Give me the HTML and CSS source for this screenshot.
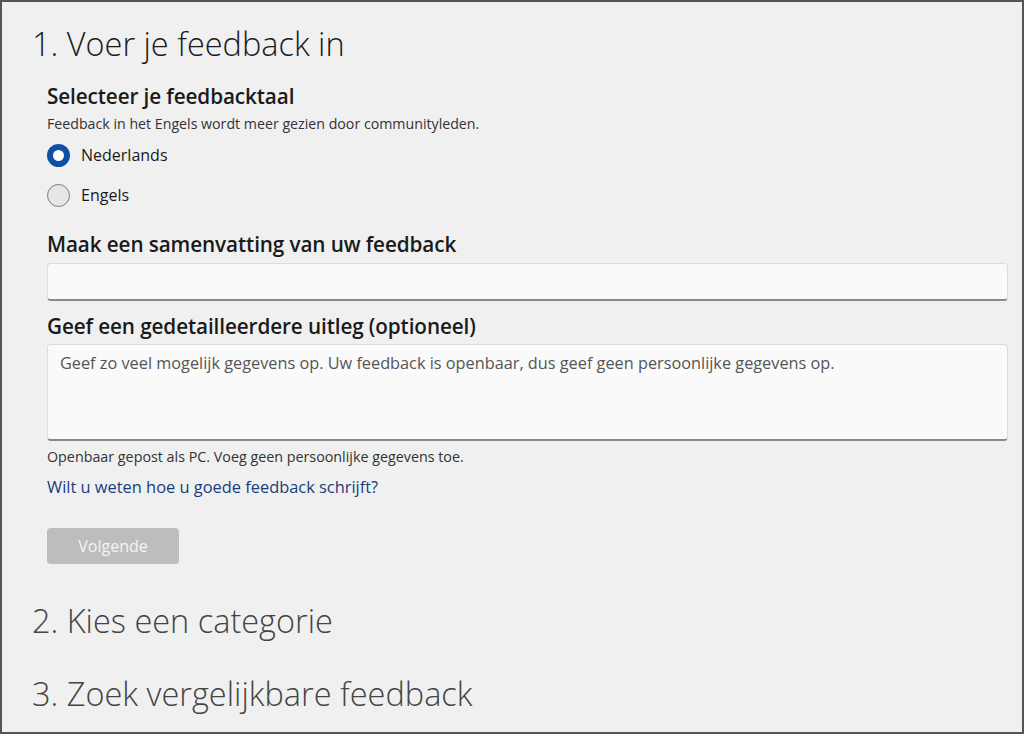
FILE: index.html
```html
<!DOCTYPE html>
<html lang="nl">
<head>
<meta charset="utf-8">
<title>Feedback</title>
<link rel="stylesheet" href="styles.css">
</head>
<body>
<div class="frame">
  <section class="step">
    <h1 class="step-title">1. Voer je feedback in</h1>
    <div class="form">
      <h2 class="label lang-label">Selecteer je feedbacktaal</h2>
      <p class="hint">Feedback in het Engels wordt meer gezien door communityleden.</p>
      <div class="radios">
        <label class="radio"><span class="dot checked"></span><span class="radio-text">Nederlands</span></label>
        <label class="radio"><span class="dot"></span><span class="radio-text">Engels</span></label>
      </div>
      <h2 class="label summary-label">Maak een samenvatting van uw feedback</h2>
      <div class="input"></div>
      <h2 class="label detail-label">Geef een gedetailleerdere uitleg (optioneel)</h2>
      <div class="textarea"><span class="placeholder">Geef zo veel mogelijk gegevens op. Uw feedback is openbaar, dus geef geen persoonlijke gegevens op.</span></div>
      <p class="note">Openbaar gepost als PC. Voeg geen persoonlijke gegevens toe.</p>
      <a class="link" href="#">Wilt u weten hoe u goede feedback schrijft?</a>
      <button class="btn" disabled>Volgende</button>
    </div>
  </section>
  <h1 class="step-title muted second">2. Kies een categorie</h1>
  <h1 class="step-title muted third">3. Zoek vergelijkbare feedback</h1>
</div>
</body>
</html>
```
FILE: styles.css
```css
* { box-sizing: border-box; }
html, body { margin: 0; padding: 0; }
body {
  width: 1024px;
  height: 734px;
  overflow: hidden;
  font-family: "Open Sans", "Noto Sans", sans-serif;
  color: #1a1a1a;
  background: #f0f0f0;
}
.frame {
  width: 1024px;
  height: 734px;
  border: 2px solid #555;
  background: #f0f0f0;
  padding: 0 0 0 30px;
  display: flex;
  flex-direction: column;
}
.step-title {
  margin: 0;
  font-weight: 300;
  font-size: 32.5px;
  line-height: 40px;
  color: #1b1b1b;
}
.step > .step-title { margin-top: 22px; }
.form {
  padding-left: 15px;
  width: 963px;
  display: flex;
  flex-direction: column;
  align-items: flex-start;
}
.label {
  margin: 0;
  font-size: 20.7px;
  font-weight: 600;
  line-height: 24px;
  color: #1a1a1a;
  letter-spacing: -0.1px;
}
.lang-label { margin-top: 20px; }
.hint {
  margin: 7px 0 0;
  font-size: 14.2px;
  line-height: 18px;
  color: #333;
}
.radios {
  display: flex;
  flex-direction: column;
  gap: 17px;
  margin-top: 11px;
}
.radio {
  display: flex;
  align-items: center;
  gap: 11px;
  font-size: 16px;
  line-height: 23px;
  color: #1a1a1a;
}
.dot {
  width: 23px;
  height: 23px;
  border-radius: 50%;
  border: 1px solid #7a7a7a;
  background: #e6e6e6;
  flex: none;
}
.dot.checked {
  border: 6px solid #0f4fa6;
  background: #fff;
}
.summary-label { margin-top: 25px; }
.input {
  margin-top: 7px;
  width: 961px;
  height: 38px;
  background: #fafafa;
  border: 1px solid #dcdcdc;
  border-bottom: 2px solid #8a8a8a;
  border-radius: 4px;
}
.detail-label { margin-top: 13px; }
.textarea {
  margin-top: 6px;
  width: 961px;
  height: 97px;
  background: #fafafa;
  border: 1px solid #dcdcdc;
  border-bottom: 2px solid #8a8a8a;
  border-radius: 4px;
  padding: 7px 12px;
}
.placeholder {
  font-size: 16.3px;
  line-height: 22px;
  color: #555;
}
.note {
  margin: 7px 0 0;
  font-size: 14.3px;
  line-height: 18px;
  color: #333;
}
.link {
  margin-top: 10px;
  font-size: 16.4px;
  line-height: 22px;
  color: #1a3d7c;
  text-decoration: none;
}
.btn {
  margin-top: 30px;
  width: 132px;
  height: 36px;
  border: none;
  border-radius: 4px;
  background: #bdbdbd;
  color: #f4f4f4;
  font-family: inherit;
  font-size: 16px;
  padding: 0;
}
.muted { color: #444; }
.second { margin-top: 37px; }
.third { margin-top: 33px; }
```
